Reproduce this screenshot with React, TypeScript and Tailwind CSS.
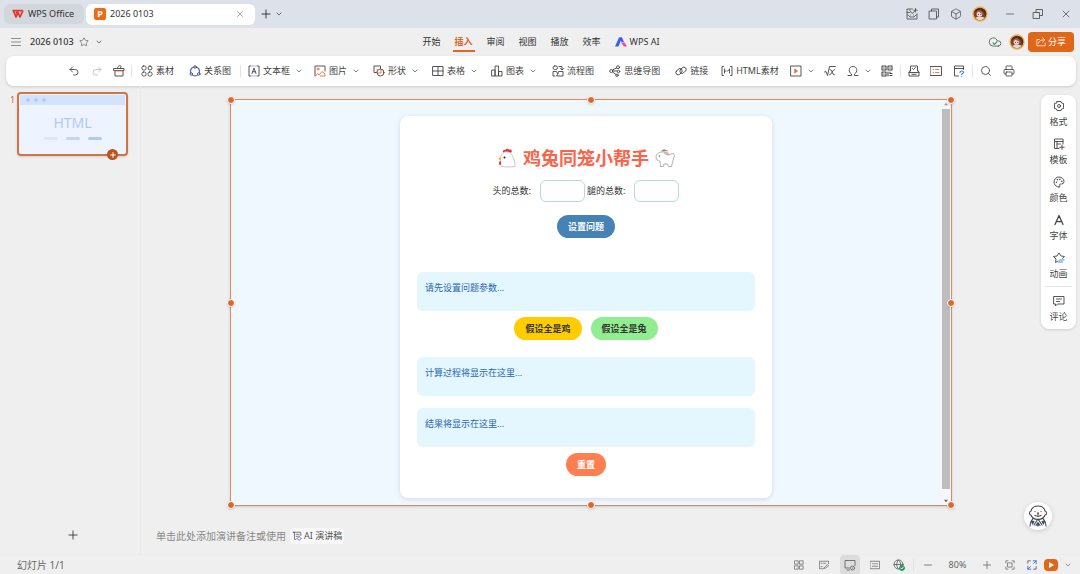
import React from "react";
import {
  AlignJustify, Star, ChevronDown, X, Plus, Minus, Undo2, Redo2, Search, Printer,
  Box, Cloud, Palette,
} from "lucide-react";

type IconProps = { children: React.ReactNode; className?: string; box?: string };

function Ico({ children, className = "size-3", box = "0 0 24 24" }: IconProps) {
  return (
    <svg
      viewBox={box}
      className={`${className} shrink-0`}
      fill="none"
      stroke="currentColor"
      strokeWidth="1.8"
      strokeLinecap="round"
      strokeLinejoin="round"
      aria-hidden="true"
    >
      {children}
    </svg>
  );
}

const Material = () => (
  <Ico>
    <rect x="2" y="2" width="8" height="8" rx="3" /><rect x="14" y="2" width="8" height="8" rx="4" />
    <rect x="2" y="14" width="8" height="8" rx="3" /><rect x="14" y="14" width="8" height="8" rx="3" />
  </Ico>
);
const Relation = () => (
  <Ico>
    <path d="M3.500 15a9 9 0 0 1 5-10.500M15.500 4.500a9 9 0 0 1 5 10.500M7.500 20.500a9 9 0 0 0 9 0" stroke="#3f6fd8" strokeWidth="2.500" />
    <circle cx="12" cy="4" r="2.500" /><circle cx="4.500" cy="18" r="2.500" /><circle cx="19.500" cy="18" r="2.500" />
  </Ico>
);
const TextBox = () => (
  <Ico>
    <path d="M5 2H2v20h3M19 2h3v20h-3" />
    <path d="M5 2h14M5 22h14" stroke="#8aa0d8" strokeWidth="1.500" />
    <path d="M8 17l4-11 4 11M9.500 13.500h5" />
  </Ico>
);
const Picture = () => (
  <Ico>
    <path d="M22 12V2H2v20" />
    <circle cx="8" cy="8" r="2" stroke="#e8703a" />
    <path d="M3 22l4-5 3 3 6-7 6 5v4h-9" stroke="#e8703a" />
  </Ico>
);
const Shapes = () => (
  <Ico>
    <path d="M8 15H2V2h13v5" /><circle cx="15" cy="15" r="7" /><path d="M9 9h7v7H9z" stroke="#e8703a" />
  </Ico>
);
const TableIcon = () => (
  <Ico><path d="M2 3h20v18H2zM12 3v18M2 12h20" /></Ico>
);
const Chart = () => (
  <Ico><path d="M2 10h6v12H2zM9 2h6v20H9zM16 13h6v9h-6z" /></Ico>
);
const Flow = () => (
  <Ico>
    <rect x="2" y="2" width="9" height="7" rx="3.500" /><path d="M14 3h6v6M17 7l3 3 3-3M6 22H2v-9h6M14 13h8v9H10zM8 13l5 5" />
  </Ico>
);
const Mind = () => (
  <Ico>
    <circle cx="4.500" cy="12" r="3" /><circle cx="18" cy="4.500" r="3" /><circle cx="19" cy="13" r="2.500" />
    <circle cx="16" cy="20.500" r="2.500" /><path d="M7 10l8-4M8 12h8M7 14l7 5" />
  </Ico>
);
const LinkIcon = () => (
  <Ico>
    <rect x="1" y="9" width="14" height="9" rx="4.500" transform="rotate(-45 8 13.500)" />
    <rect x="9" y="6" width="14" height="9" rx="4.500" transform="rotate(-45 16 10.500)" />
  </Ico>
);
const HtmlIcon = () => (
  <Ico><path d="M5 3H2v18h3M19 3h3v18h-3M7 8v8M7 12h3M17 8v8M13 12l4-3" /></Ico>
);
const MediaIcon = () => (
  <Ico><path d="M2 2h20v20H2z" /><path d="M10 8.500l5 3.500-5 3.500z" fill="#e8703a" stroke="#e8703a" /></Ico>
);
const Formula = () => (
  <Ico><path d="M1 14l3-1 3 8L11 3h12M12 9c6 0 3 11 9 11M21 9c-4 0-6 11-10 11" /></Ico>
);
const Omega = () => (
  <Ico><path d="M2 21h7v-3C2 14 3 3 12 3s10 11 3 15v3h7" /></Ico>
);
const QrIcon = () => (
  <Ico>
    <path d="M2 2h8v8H2zM14 2h8v8h-8zM2 14h8v8H2zM14 14v8M18 14v3h4M18 21h4M5.500 6h1M17.500 6h1M5.500 18h1" strokeWidth="2.200" />
  </Ico>
);
const Ballot = () => (
  <Ico><path d="M5 12V2h14v10M9 7l2 2 4-4M5 10l-3 4v8h20v-8l-3-4M2 15h20M8 18.500h8" /></Ico>
);
const Card = () => (
  <Ico><path d="M1 3h22v18H1z" /><path d="M6 9h1M6 15h1M11 9h7M11 15h7" stroke="#e8703a" /></Ico>
);
const Quiz = () => (
  <Ico>
    <path d="M11 22H3V2h18v7M3 7h18" />
    <path d="M14 15c0-4 7-4 7 0 0 2-3.500 2-3.500 4M17.500 22v.5" stroke="#2f7fe0" strokeWidth="2.200" />
  </Ico>
);
const Brush = () => (
  <Ico>
    <path d="M4 12v10h16V12M2 7h20v4H2zM9 7c-1-6 7-7 7-4l-1 4" /><path d="M4 12h16" stroke="#e8703a" />
  </Ico>
);

function Avatar({ className }: { className: string }) {
  return (
    <svg viewBox="0 0 28 28" className={`${className} shrink-0`} role="img" aria-label="头像">
      <circle cx="14" cy="14" r="13.500" fill="#f1b54c" />
      <circle cx="14" cy="14" r="11" fill="#7d4030" />
      <path d="M4 10c3-6 12-9 19-2 3 5 2 9 0 12 0-4-1-8-3-10-5-2-11-1-16 0z" fill="#4b2a25" />
      <ellipse cx="13" cy="14" rx="5" ry="5" fill="#f2d9c8" />
      <path d="M7 14c2-1 3-4 5-5 1 3 4 3 8 6-1-6-4-8-7-8s-6 3-6 7z" fill="#a5603f" />
      <circle cx="11.500" cy="15" r=".9" fill="#43221c" /><circle cx="15.500" cy="15" r=".9" fill="#43221c" />
      <path d="M6 20c4-1 11-1 16 0-4 6-12 6-16 0z" fill="#ded9d8" />
    </svg>
  );
}

function Chicken() {
  return (
    <svg viewBox="0 0 20 20" className="size-5 shrink-0" role="img" aria-label="鸡">
      <path d="M6 4.500C5.500 2.500 7 1.500 8.500 2c1-1.800 3-1.600 3.500-.2 2-.8 3.500.6 2.500 2.700z" fill="#e8303f" />
      <path d="M4 18.500C3.500 14 3 11 4 8c1-3 4-5 7-4 4 1 5 5 6 8 1 2.500 1.500 5 1 6.500-4 .6-10 .6-14 0z" fill="#fff" stroke="#b9b9b9" strokeWidth=".8" />
      <path d="M4 8.500L1 11l3 1.500z" fill="#f5b731" />
      <path d="M3 13c1.500 0 1.500 4 0 4s-1.200-3 0-4z" fill="#e8303f" />
      <circle cx="7.500" cy="9.500" r="1" fill="#222" />
    </svg>
  );
}

function Rabbit() {
  return (
    <svg viewBox="0 0 20 20" className="size-5 shrink-0" role="img" aria-label="兔">
      <path d="M1 9c0-3 3-5 6-5 2-.5 4 .8 5 3l6-1.500c2 .5 1.500 3 .5 5C18 13 17 16 16.500 18.500h-3L12.500 16H9l-.5 2.500h-3L5 13c-2 0-4-1-4-4z" fill="#fff" stroke="#a8a8a8" strokeWidth=".9" />
      <path d="M6.500 3L9 1.500l3.500 1.500z" fill="#888" stroke="#888" strokeWidth=".6" />
      <path d="M8 3.500l5.500 1 .5 3-4.500-1.500z" fill="#f0a3a0" />
      <circle cx="4.500" cy="8" r=".7" fill="#555" />
    </svg>
  );
}

function Dog() {
  return (
    <svg viewBox="0 0 24 24" className="size-6" fill="none" stroke="#444" strokeWidth="1.100" strokeLinecap="round" strokeLinejoin="round" aria-hidden="true">
      <path d="M5 7c1-4 4-5 7-5s6 1 7 5c2 .5 2 4 0 4-1 3-4 4.500-7 4.500S6 14 5 11c-2 0-2-3.500 0-4z" />
      <path d="M9 7.500h.1M15 7.500h.1M11.300 9h1.400M12 9.500v1.500M9 11.500c2 1 4 1 6 0" />
      <path d="M4 22c0-4 1-5 3-7.500M20 22c0-4-1-5-3-7.500M8 21l4-6 4 6M10 21.500l2-3 2 3" />
      <path d="M5.500 17l2.500.5-1.500 2.500zM18.500 17l-2.500.5 1.500 2.500zM11.500 20.500h1l-.5 1.500z" fill="#2452c8" stroke="#2a4a94" />
    </svg>
  );
}

function Logo() {
  return (
    <svg viewBox="0 0 24 18" className="h-2.5 w-3 shrink-0" fill="none" stroke="#e5352c" strokeWidth="3.500" strokeLinejoin="round" aria-hidden="true">
      <path d="M1 2h20M3 3l5 12 4-9 4 9 6-13M8 8l4-5" />
    </svg>
  );
}

function AiLogo() {
  return (
    <svg viewBox="0 0 24 20" className="h-2.5 w-3 shrink-0" aria-hidden="true">
      <path d="M0 19L8 1h6L7 19z" fill="#2f62f5" />
      <path d="M9 1h5l4 9h-5z" fill="#4a55f5" />
      <path d="M12 11h7l5 8h-6z" fill="#f0459c" />
    </svg>
  );
}

const Chevron = () => <ChevronDown className="size-2 shrink-0" strokeWidth={2} />;
const Divider = () => <span className="h-3 w-px shrink-0 bg-[#e2e2e2]" />;

type ToolProps = { icon: React.ReactNode; label?: string; name?: string; menu?: boolean; className?: string };
function Tool({ icon, label, name, menu, className = "" }: ToolProps) {
  return (
    <button aria-label={name} className={`flex shrink-0 items-center gap-[3px] whitespace-nowrap ${className}`}>
      {icon}
      {label && <span>{label}</span>}
      {menu && <span className="ml-0.5"><Chevron /></span>}
    </button>
  );
}

function TitleBar() {
  return (
    <header className="flex h-7 shrink-0 items-center bg-[#dde2ea] pl-1 pr-2">
      <button className="flex h-5 w-20 items-center gap-1 rounded-md bg-[#d2d6dd] pl-2 whitespace-nowrap"><Logo />WPS Office</button>
      <div className="ml-0.5 flex h-[21px] w-[169px] items-center gap-1 rounded-md bg-white pl-2 pr-2.5">
        <span className="flex size-3 items-center justify-center rounded-xs bg-[#ef6a17] text-[9px] font-bold text-white">P</span>
        <span className="flex-1">2026 0103</span>
        <button aria-label="关闭标签"><X className="size-2.5 text-[#888]" strokeWidth={1.7} /></button>
      </div>
      <button aria-label="新建" className="ml-1"><Plus className="size-3.5" strokeWidth={1.6} /></button>
      <button aria-label="标签列表" className="ml-0.5"><Chevron /></button>
      <div className="ml-auto flex items-center text-[#555]">
        <button aria-label="助手" className="mr-2.5">
          <Ico><path d="M13 2H2v20h20V12M2 9h5M3 13l5 5h8l5-5M7 4l5 7 5-4M9 14h.1M15 14h.1" /><path d="M19 1v7M15.500 4.500h7" /></Ico>
        </button>
        <button aria-label="窗口" className="mr-2.5">
          <Ico><path d="M3 6h14v16H3zM7 6V2h14v16h-4" /></Ico>
        </button>
        <button aria-label="应用" className="mr-2.5"><Box className="size-3" strokeWidth={1.6} /></button>
        <button aria-label="账户" className="mr-4"><Avatar className="size-4" /></button>
        <button aria-label="最小化" className="mr-4"><Minus className="size-3" strokeWidth={1.6} /></button>
        <button aria-label="还原" className="mr-4">
          <Ico><path d="M3 9h12v12H3zM8 9V3h13v12h-6" /></Ico>
        </button>
        <button aria-label="关闭"><X className="size-3" strokeWidth={1.6} /></button>
      </div>
    </header>
  );
}

const TABS = ["开始", "插入", "审阅", "视图", "播放", "效率"];

function MenuBar() {
  return (
    <nav className="grid h-7 shrink-0 grid-cols-[1fr_auto_1fr] items-center pl-2.5 pr-1.5">
      <div className="flex items-center">
        <button aria-label="菜单" className="mr-2"><AlignJustify className="size-3 text-[#777]" strokeWidth={1.6} /></button>
        <span className="font-medium">2026 0103</span>
        <button aria-label="收藏" className="ml-[5px]"><Star className="size-2.5 text-[#777]" /></button>
        <button aria-label="更多" className="ml-1.5"><Chevron /></button>
      </div>
      <div className="mr-1 flex items-center gap-2.5">
        {TABS.map((t) => (
          <button
            key={t}
            className={
              t === "插入"
                ? "h-[19px] border-b-2 border-[#d9682a] px-0.5 pt-0.5 font-bold text-[#d9682a]"
                : "px-0.5"
            }
          >
            {t}
          </button>
        ))}
        <button className="flex items-center gap-[3px] pl-0.5"><AiLogo />WPS AI</button>
      </div>
      <div className="flex items-center justify-end gap-[3px]">
        <button aria-label="云同步" className="relative mr-1">
          <Cloud className="size-3.5 text-[#666]" strokeWidth={1.6} />
          <svg viewBox="0 0 24 24" className="absolute inset-0 size-3.5" fill="none" stroke="#279a60" strokeWidth="2" aria-hidden="true"><path d="M8 13l3 3 5-5" /></svg>
        </button>
        <Avatar className="size-4" />
        <button className="flex h-5 w-[46px] items-center justify-center gap-0.5 rounded bg-[#e06618] text-white">
          <Ico className="size-2.5"><path d="M8 6H2v15h20v-6M6 15c1-6 5-8 14-8M16 2l5 5-5 5" /></Ico>
          分享
        </button>
      </div>
    </nav>
  );
}

function Ribbon() {
  return (
    <div className="ml-1.5 mr-1 flex h-[30px] shrink-0 items-center rounded-lg bg-white pl-[62px] text-[#444] shadow-[0_1px_3px_rgba(0,0,0,0.16)]">
      <Tool name="撤销" icon={<Undo2 className="size-3" strokeWidth={1.7} />} className="mr-[11px]" />
      <Tool name="重做" icon={<Redo2 className="size-3 text-[#bbb]" strokeWidth={1.7} />} className="mr-2.5" />
      <Tool name="美化" icon={<Brush />} className="mr-1.5" />
      <Divider />
      <Tool icon={<Material />} label="素材" className="ml-[9px] mr-[15px]" />
      <Tool icon={<Relation />} label="关系图" className="mr-[9px]" />
      <Divider />
      <Tool icon={<TextBox />} label="文本框" menu className="ml-[7px] mr-[11px]" />
      <Tool icon={<Picture />} label="图片" menu className="mr-[13px]" />
      <Tool icon={<Shapes />} label="形状" menu className="mr-[13px]" />
      <Tool icon={<TableIcon />} label="表格" menu className="mr-[13px]" />
      <Tool icon={<Chart />} label="图表" menu className="mr-[15px]" />
      <Tool icon={<Flow />} label="流程图" className="mr-[15px]" />
      <Tool icon={<Mind />} label="思维导图" className="mr-[15px]" />
      <Tool icon={<LinkIcon />} label="链接" className="mr-[13px]" />
      <Tool icon={<HtmlIcon />} label="HTML素材" className="mr-[11px]" />
      <Tool name="媒体" icon={<MediaIcon />} menu className="mr-[9px]" />
      <Tool name="公式" icon={<Formula />} className="mr-[11px]" />
      <Tool name="符号" icon={<Omega />} menu className="mr-[9px]" />
      <Tool name="二维码" icon={<QrIcon />} className="mr-[7px]" />
      <Divider />
      <Tool name="投票" icon={<Ballot />} className="ml-[7px] mr-2.5" />
      <Tool name="卡片" icon={<Card />} className="mr-[11px]" />
      <Tool name="测验" icon={<Quiz />} className="mr-[7px]" />
      <Divider />
      <Tool name="搜索" icon={<Search className="size-3" strokeWidth={1.7} />} className="ml-[7px] mr-[11px]" />
      <Tool name="打印" icon={<Printer className="size-3" strokeWidth={1.7} />} />
    </div>
  );
}

function Slides() {
  return (
    <aside className="flex w-[141px] shrink-0 flex-col border-r border-[#eaeaea] pb-3">
      <div className="flex gap-1 pl-2.5 pt-1.5">
        <span className="w-[3px] pt-0.5 text-[#d9682a]">1</span>
        <div className="relative h-16 w-[111px] rounded border-2 border-[#cf7444] bg-[#edf4ff] p-px shadow-sm">
          <div className="flex h-2.5 items-center gap-1 bg-[#d3e3fc] pl-1.5">
            <i className="size-1 rounded-full bg-[#b5cdf6]" />
            <i className="size-1 rounded-full bg-[#b5cdf6]" />
            <i className="size-1 rounded-full bg-[#b5cdf6]" />
          </div>
          <div className="pt-2.5 text-center text-sm leading-4 text-[#b3c8f5]">HTML</div>
          <div className="mt-1.5 flex justify-center gap-2">
            <i className="h-[3px] w-3.5 rounded bg-[#dde7fb]" />
            <i className="h-[3px] w-3.5 rounded bg-[#c3d6fa]" />
            <i className="h-[3px] w-3.5 rounded bg-[#b0c9f8]" />
          </div>
          <button aria-label="添加" className="absolute -bottom-1.5 right-2 flex size-[11px] items-center justify-center rounded-full bg-[#b9541b] text-white">
            <Plus className="size-2" strokeWidth={3} />
          </button>
        </div>
      </div>
      <button aria-label="新建幻灯片" className="mt-auto self-center pl-1.5"><Plus className="size-3.5" strokeWidth={1.5} /></button>
    </aside>
  );
}

const HANDLES = [
  "left-0 top-0", "left-1/2 top-0", "left-full top-0",
  "left-0 top-1/2", "left-full top-1/2",
  "left-0 top-full", "left-1/2 top-full", "left-full top-full",
];

function Message({ children, className }: { children: React.ReactNode; className: string }) {
  return (
    <p className={`h-[39px] rounded-md bg-[#e4f6fe] px-2 pt-2 text-[9px] leading-4 text-[#2866b4] ${className}`}>{children}</p>
  );
}

function Helper() {
  return (
    <main className="w-[372px] rounded-lg bg-white px-[17px] pb-[22px] pt-7 shadow-[0_1px_5px_rgba(60,90,120,0.18)]">
      <h1 className="flex items-center justify-center gap-1.5 text-lg leading-7 font-bold text-[#fc6349]">
        <Chicken />鸡兔同笼小帮手<Rabbit />
      </h1>
      <form onSubmit={(e) => e.preventDefault()}>
        <div className="mt-2 flex items-center justify-center text-[#333]">
          <label htmlFor="heads" className="mr-[9px]">头的总数:</label>
          <input id="heads" className="h-[22px] w-[45px] rounded-md border border-[#addbe7] bg-white px-1" />
          <label htmlFor="legs" className="ml-0.5 mr-[9px]">腿的总数:</label>
          <input id="legs" className="h-[22px] w-[45px] rounded-md border border-[#addbe7] bg-white px-1" />
        </div>
        <button className="mx-auto mt-[13px] block h-[23px] rounded-full bg-[#4682b4] px-[11px] font-bold text-white">设置问题</button>
      </form>
      <Message className="mt-[34px]">请先设置问题参数...</Message>
      <div className="mt-1.5 flex justify-center gap-[9px] text-[#333]">
        <button className="h-[23px] rounded-full bg-[#ffcc00] px-[11px] font-bold">假设全是鸡</button>
        <button className="h-[23px] rounded-full bg-[#90ee90] px-[11px] font-bold">假设全是兔</button>
      </div>
      <Message className="mt-[17px]">计算过程将显示在这里...</Message>
      <Message className="mt-3">结果将显示在这里...</Message>
      <button className="mx-auto mt-1.5 block h-[23px] rounded-full bg-[#ff7f50] px-[11px] font-bold text-white">重置</button>
    </main>
  );
}

function Stage() {
  return (
    <section className="flex min-w-0 flex-1 flex-col pl-[89px] pt-[13px]">
      <div className="relative mr-[89px] flex h-[407px] border border-[#dc8a62] bg-[#f0f8ff] shadow-sm">
        <div className="flex flex-1 justify-center pt-4"><div><Helper /></div></div>
        <div className="flex w-2.5 flex-col items-center bg-[#f5f7fa] py-0.5 text-[#666]">
          <svg viewBox="0 0 8 6" className="h-1 w-1.5" fill="#999" aria-hidden="true"><path d="M1 5l3-4 3 4z" /></svg>
          <div className="mb-2.5 mt-[3px] w-2 flex-1 bg-[#bdbdbd]" />
          <svg viewBox="0 0 8 6" className="h-1 w-1.5" fill="currentColor" aria-hidden="true"><path d="M1 1l3 4 3-4z" /></svg>
        </div>
        {HANDLES.map((pos) => (
          <span key={pos} className={`absolute size-2 -translate-1/2 rounded-full border border-white bg-[#d9692a] shadow ${pos}`} />
        ))}
      </div>
      <div className="-ml-[74px] mt-auto flex items-center gap-1 pb-2.5 text-[10px] text-[#888]">
        <span>单击此处添加演讲备注或使用</span>
        <button className="flex h-4 items-center gap-0.5 rounded bg-[#f8f8f8] px-0.5 text-[9px] text-[#555]">
          <Ico className="size-2.5"><path d="M9 20H6V3H2h19v8M10 8h7M10 13h3" /><path d="M17 12l2 4 4 2-4 2-2 3-2-3-4-2 4-2z" stroke="#7a5cf0" /></Ico>
          AI 演讲稿
        </button>
      </div>
    </section>
  );
}

const SIDE: { label: string; icon: React.ReactNode }[] = [
  { label: "格式", icon: <Ico><path d="M8 3h8l1 3 4 1v10l-4 1-1 3H8l-1-3-4-1V7l4-1z" /><circle cx="12" cy="12" r="3" /></Ico> },
  { label: "模板", icon: <Ico><path d="M12 21H3V2h17v10M3 7h17M8 12h7M8 7v14M18 14v9M13.500 18.500h9" /></Ico> },
  { label: "颜色", icon: <Palette className="size-3" strokeWidth={1.8} /> },
  { label: "字体", icon: <Ico><path d="M4 21L12 3l8 18M7 15h10" strokeWidth="2.500" /></Ico> },
  { label: "动画", icon: <Ico><path d="M10 18l-5 3 1-7-5-5 7-1 4-6 4 6 7 1-4 4" /><path d="M13 16h9M11 20h8" stroke="#2f7fe0" /></Ico> },
  { label: "评论", icon: <Ico><path d="M2 3h20v15H9l-4 4v-4H2zM7 8h10M7 13h6" /></Ico> },
];

const sidePadding = (label: string) => {
  if (label === "评论") return "mx-1 border-t border-[#e6e6e6] pt-2";
  if (label === "动画") return "pb-[5px]";
  return "pb-[9px]";
};

function SidePanel() {
  return (
    <aside className="flex w-[39px] shrink-0 flex-col justify-between pb-6 pr-1 pt-[9px]">
      <div className="flex flex-col rounded-lg bg-white py-[5px] text-[#444] shadow-[0_1px_3px_rgba(0,0,0,0.14)]">
        {SIDE.map((s) => (
          <button
            key={s.label}
            className={`flex flex-col items-center gap-[3px] text-[9px] leading-[14px] ${sidePadding(s.label)}`}
          >
            {s.icon}
            {s.label}
          </button>
        ))}
      </div>
      <button aria-label="助理" className="-ml-[17px] flex size-7 items-center justify-center rounded-full bg-white shadow-[0_1px_5px_rgba(0,0,0,0.15)]"><Dog /></button>
    </aside>
  );
}

function StatusBar() {
  return (
    <footer className="flex h-5 shrink-0 items-center border-t border-[#ebebeb] pl-[17px] pr-2 text-[#666]">
      <span className="text-[10px]">幻灯片 1/1</span>
      <div className="ml-auto flex items-center">
        <button aria-label="浏览视图" className="mr-[15px]"><Ico className="size-2.5"><path d="M2 2h8v8H2zM14 2h8v8h-8zM2 14h8v8H2zM14 14h8v8h-8z" /></Ico></button>
        <button aria-label="备注" className="mr-[11px]"><Ico className="size-2.5"><path d="M10 21H1V3h22v6M5 8h3M5 16h3M12 19l8-8 3 3-8 6h-3zM11 8h5" /></Ico></button>
        <button aria-label="普通视图" className="mr-2.5 flex size-5 items-center justify-center rounded bg-[#dcdcdc]"><Ico><path d="M11 18H2V3h20v10M6 22h5" /><circle cx="17" cy="18" r="4" /><path d="M17 18h.1" /></Ico></button>
        <button aria-label="阅读视图" className="mr-[13px]"><Ico className="size-2.5"><path d="M1 3h22v18H1zM6 9h2M11 9h7M6 15h12" /></Ico></button>
        <button aria-label="网络" className="mr-2">
          <Ico><circle cx="11" cy="11" r="9" /><path d="M2 11h18M11 2c-5 5-5 13 0 18M11 2c4 4 5 8 4 12" /><circle cx="18" cy="18" r="5" fill="#19a05c" stroke="#19a05c" /><path d="M15.500 18l2 2 3-3.500" stroke="#fff" /></Ico>
        </button>
        <Divider />
        <button aria-label="缩小" className="ml-2"><Minus className="size-3" strokeWidth={1.6} /></button>
        <span className="w-[47px] text-center text-[9px]">80%</span>
        <button aria-label="放大" className="mr-3"><Plus className="size-3" strokeWidth={1.6} /></button>
        <button aria-label="适应窗口" className="mr-3"><Ico className="size-2.5"><path d="M2 7V2h5M17 2h5v5M22 17v5h-5M7 22H2v-5M7 7h10v10H7z" /></Ico></button>
        <button aria-label="全屏" className="mr-[7px]"><Ico className="size-2.5"><path d="M2 8V2h6M22 16v6h-6" strokeWidth="2.200" /><path d="M15 2h7v7M22 2l-6 6M2 15v7h7M2 22l6-6" stroke="#3970e0" strokeWidth="2.200" /></Ico></button>
        <button aria-label="放映" className="mr-1.5 flex h-3 w-3.5 items-center justify-center rounded bg-[#e06618]"><svg viewBox="0 0 8 8" className="size-2" fill="#fff" aria-hidden="true"><path d="M2 1l5 3-5 3z" /></svg></button>
        <button aria-label="放映选项"><Chevron /></button>
      </div>
    </footer>
  );
}

export default function App() {
  return (
    <div className="flex min-h-screen flex-col bg-[#efefef] font-['Noto_Sans','Noto_Sans_CJK_SC',sans-serif] text-[9px] leading-3 text-[#333]">
      <TitleBar />
      <MenuBar />
      <Ribbon />
      <div className="flex flex-1">
        <Slides />
        <Stage />
        <SidePanel />
      </div>
      <StatusBar />
    </div>
  );
}
